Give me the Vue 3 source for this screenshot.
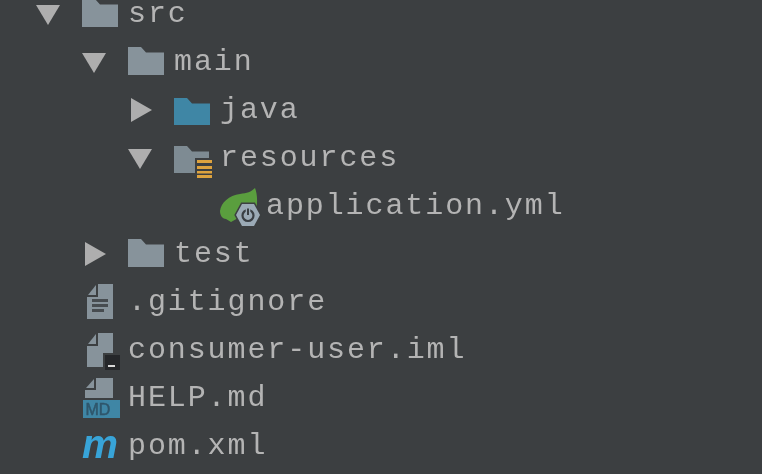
<template>
  <div class="tree">
    <div v-for="row in rows" :key="row.name" class="row" :class="'depth-' + row.depth">
      <!-- expand arrow -->
      <svg class="slot" width="46" height="48" viewBox="0 0 46 48">
        <path v-if="row.arrow === 'down'" d="M0 16H24L12 36Z" fill="#aeaeae" />
        <path v-if="row.arrow === 'right'" d="M3 13L24 25L3 37Z" fill="#aeaeae" />
      </svg>

      <svg class="slot" width="46" height="48" viewBox="0 0 46 48">
        <path v-if="row.icon === 'folder'" d="M0 10H13L18 15.500H36V38H0Z" fill="#87939b" />
        <path v-if="row.icon === 'java'" d="M0 13H13L18 18.500H36V40H0Z" fill="#3f86a5" />

        <g v-if="row.icon === 'resources'">
          <path d="M0 13H13L18 18.500H35V25H21V40H0Z" fill="#7e8b93" />
          <path d="M23 27H38V30H23ZM23 33H38V36H23ZM23 38H38V40.500H23ZM23 42H38V45H23Z" fill="#dea33e" />
        </g>

        <g v-if="row.icon === 'spring'">
          <path d="M35 7C31 11 27 12 20 13C9 14 1 22 0 30C0 35 3 38 6 38L11 41L20 36L36 30C38 20 37 12 35 7Z" fill="#5a9e3e" />
          <path d="M22 23H34L40 34L34 45H22L16 34Z" fill="#9baab6" stroke="#3c3f41" stroke-width="3" paint-order="stroke" />
          <circle cx="28" cy="34.500" r="5.500" fill="none" stroke="#3a3f44" stroke-width="2.200" />
          <path d="M28 27.500V34" stroke="#9baab6" stroke-width="4.500" />
          <path d="M28 27.500V34" stroke="#3a3f44" stroke-width="2" />
        </g>

        <g v-if="row.icon === 'text'">
          <path d="M6 18L14 8V18Z" fill="#87939b" />
          <path d="M16 7H31V42H5V20H16Z" fill="#87939b" />
          <path d="M10 22H26V25H10ZM10 27H26V30H10ZM10 32H22V35H10Z" fill="#474c50" />
        </g>

        <g v-if="row.icon === 'iml'">
          <path d="M6 19L14 9V19Z" fill="#87939b" />
          <path d="M16 8H31V28H21V42H5V21H16Z" fill="#87939b" />
          <rect x="23" y="30" width="15" height="15" fill="#25272a" />
          <rect x="26" y="40" width="7" height="2" fill="#d8d8d8" />
        </g>

        <g v-if="row.icon === 'md'">
          <path d="M4 15L12 6V15Z" fill="#87939b" />
          <path d="M14 5H31V25H3V17H14Z" fill="#87939b" />
          <rect x="1" y="27" width="37" height="18" fill="#3f86a5" />
          <text x="3.500" y="42" class="md">MD</text>
        </g>

        <text v-if="row.icon === 'maven'" x="0" y="37" textLength="36" lengthAdjust="spacingAndGlyphs" class="maven">m</text>
      </svg>

      <span class="label">{{ row.name }}</span>
    </div>
  </div>
</template>

<script setup>
const rows = [
  { name: 'src', depth: 0, arrow: 'down', icon: 'folder' },
  { name: 'main', depth: 1, arrow: 'down', icon: 'folder' },
  { name: 'java', depth: 2, arrow: 'right', icon: 'java' },
  { name: 'resources', depth: 2, arrow: 'down', icon: 'resources' },
  { name: 'application.yml', depth: 3, icon: 'spring' },
  { name: 'test', depth: 1, arrow: 'right', icon: 'folder' },
  { name: '.gitignore', depth: 0, icon: 'text' },
  { name: 'consumer-user.iml', depth: 0, icon: 'iml' },
  { name: 'HELP.md', depth: 0, icon: 'md' },
  { name: 'pom.xml', depth: 0, icon: 'maven' }
]
</script>

<style>
html,
body {
  background: #3c3f41;
}
</style>

<style scoped>
.tree {
  height: 474px;
  overflow: hidden;
  background: #3c3f41;
  display: flex;
  flex-direction: column;
  filter: blur(0.4px);
}

.row {
  flex: none;
  height: 48px;
  display: flex;
  align-items: center;
}

/* the first row is cut by the top of the window */
.row:first-child {
  margin-top: -11px;
}

.depth-0 { padding-left: 36px; }
.depth-1 { padding-left: 82px; }
.depth-2 { padding-left: 128px; }
.depth-3 { padding-left: 174px; }

.slot {
  flex: none;
  overflow: visible;
}

.label {
  margin-top: 2px;
  font-family: "Liberation Mono", monospace;
  font-size: 30px;
  letter-spacing: 1.9px;
  color: #b4b4b4;
  white-space: pre;
}

.md {
  font-family: "Liberation Sans", sans-serif;
  font-size: 16px;
  fill: #2f566b;
  stroke: #2f566b;
  stroke-width: 0.5px;
}

.maven {
  font-family: "Liberation Sans", sans-serif;
  font-size: 41px;
  font-weight: 700;
  font-style: italic;
  fill: #38a4d8;
}
</style>
